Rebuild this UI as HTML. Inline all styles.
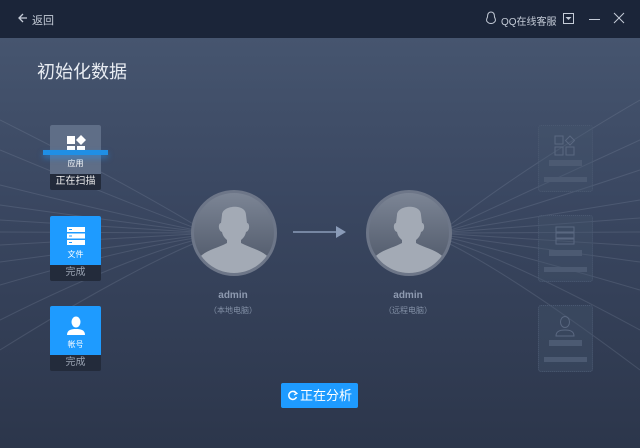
<!DOCTYPE html><html><head><meta charset="utf-8"><style>
body{margin:0;width:640px;height:448px;overflow:hidden;font-family:"Liberation Sans","Noto Sans CJK SC",sans-serif;position:relative;background:linear-gradient(#46556f 38px,#3a4761 200px,#2c364b 448px)}
.hd{position:absolute;left:0;top:0;width:640px;height:38px;background:#1b2539;color:#c5ccd8;font-size:11px}
.a{position:absolute}
.card{position:absolute;left:50px;width:51px;height:65px;border-radius:2px;overflow:hidden;background:#232b3b}
.card .t{height:49px;text-align:center;color:#fff;font-size:8px}
.card .b{height:16px;text-align:center;color:#9aa3b2;font-size:10px;line-height:16px}
.circ{position:absolute;width:80px;height:80px;border-radius:50%;border:3px solid #6d7688;background:linear-gradient(#7c8595,#4c5566);overflow:hidden}
.g{position:absolute;left:538px;width:53px;height:65px;border:1px dotted #4a5871;border-radius:3px;background:rgba(70,85,110,.35)}
.g .r1{position:absolute;left:10px;top:34px;width:33px;height:6px;background:#4c5a72}
.g .r2{position:absolute;left:5px;top:51px;width:43px;height:5px;background:#4c5a72}
.nm{position:absolute;width:100px;text-align:center;color:#8e9ab0;font-size:10px;font-weight:bold}
.sb{position:absolute;width:100px;text-align:center;color:#8390a6;font-size:8px}
</style></head><body>
<svg class="a" style="left:0;top:0" width="640" height="448">
<g stroke="#a0abbf" stroke-width="1" opacity="0.18" fill="none">
<path d="M0 120Q120 180 195 225"/><path d="M0 150Q120 200 195 228"/><path d="M0 185Q120 215 195 230"/><path d="M0 205Q120 222 195 231"/><path d="M0 220L195 232"/><path d="M0 232L195 233"/><path d="M0 245L195 234"/><path d="M0 262L195 236"/><path d="M0 285Q120 250 195 238"/><path d="M0 320Q120 260 195 240"/><path d="M0 350Q120 275 195 243"/>
<path d="M640 100Q520 170 450 225"/><path d="M640 140Q520 195 450 228"/><path d="M640 170Q520 210 450 230"/><path d="M640 200Q520 220 450 231"/><path d="M640 218L450 232"/><path d="M640 232L450 233"/><path d="M640 246L450 234"/><path d="M640 262L450 236"/><path d="M640 290Q520 255 450 238"/><path d="M640 330Q520 265 450 241"/><path d="M640 370Q520 280 450 244"/>
</g></svg>
<div class="hd">
<svg class="a" style="left:17px;top:12px" width="12" height="12"><path d="M10 6H2M6 2L2 6L6 10" stroke="#c5ccd8" stroke-width="1.3" fill="none"/></svg>
<span class="a" style="left:32px;top:12px">返回</span>
<svg class="a" style="left:485px;top:11px" width="12" height="14"><path d="M6 1C3 1 2.5 4 2.5 6C1.5 8 1 10 2.5 11C4 13 8 13 9.5 11C11 10 10.5 8 9.5 6C9.5 4 9 1 6 1Z" stroke="#c5ccd8" fill="none"/></svg>
<span class="a" style="left:501px;top:13px;font-size:10px">QQ在线客服</span>
<div class="a" style="left:563px;top:13px;width:9px;height:9px;border:1px solid #c5ccd8"></div>
<svg class="a" style="left:565px;top:16px" width="7" height="5"><path d="M0.5 1H6.5L3.5 4Z" fill="#c5ccd8"/></svg>
<div class="a" style="left:589px;top:19px;width:11px;height:1px;background:#c5ccd8"></div>
<svg class="a" style="left:613px;top:12px" width="12" height="12"><path d="M1 1L11 11M11 1L1 11" stroke="#c5ccd8" stroke-width="1"/></svg>
</div>
<div class="a" style="left:37px;top:58px;color:#e8ecf2;font-size:18px">初始化数据</div>

<div class="card" style="top:125px"><div class="t" style="background:#5f6e87">
<svg style="margin-top:10px" width="20" height="20"><rect x="1" y="1" width="8" height="8" fill="#fff"/><rect x="1" y="11" width="8" height="8" fill="#fff"/><rect x="11" y="11" width="8" height="8" fill="#fff"/><path d="M15 0L20 5L15 10L10 5Z" fill="#fff"/></svg><div style="margin-top:1px">应用</div></div><div class="b" style="color:#eee">正在扫描</div></div>
<div class="a" style="left:43px;top:150px;width:65px;height:5px;background:#1f8fe6;box-shadow:0 3px 6px rgba(30,150,255,.5)"></div>
<div class="card" style="top:216px"><div class="t" style="background:#1e9bff">
<svg style="margin-top:10px" width="20" height="20"><rect x="1" y="1" width="18" height="5" fill="#fff"/><rect x="1" y="7.5" width="18" height="5" fill="#fff"/><rect x="1" y="14" width="18" height="5" fill="#fff"/><g fill="#1e9bff"><rect x="3" y="3" width="3" height="1"/><rect x="3" y="9.5" width="3" height="1"/><rect x="3" y="16" width="3" height="1"/></g></svg><div style="margin-top:1px">文件</div></div><div class="b">完成</div></div>
<div class="card" style="top:306px"><div class="t" style="background:#1e9bff">
<svg style="margin-top:10px" width="20" height="20"><ellipse cx="10" cy="6" rx="4.5" ry="5.5" fill="#fff"/><path d="M1 19C1 14 5 13 10 13C15 13 19 14 19 19Z" fill="#fff"/></svg><div style="margin-top:1px">帐号</div></div><div class="b">完成</div></div>

<div class="circ" style="left:191px;top:190px"><svg width="80" height="80"><path d="M28 22C28 12 52 10 52 22L53 30C56 30 56 38 52 39C51 44 48 46 47 47L47 50C56 55 68 57 74 64L74 80L6 80L6 64C12 57 24 55 33 50L33 47C32 46 29 44 28 39C24 38 24 30 27 30Z" fill="#a3aab5"/></svg></div>
<div class="circ" style="left:366px;top:190px"><svg width="80" height="80"><path d="M28 22C28 12 52 10 52 22L53 30C56 30 56 38 52 39C51 44 48 46 47 47L47 50C56 55 68 57 74 64L74 80L6 80L6 64C12 57 24 55 33 50L33 47C32 46 29 44 28 39C24 38 24 30 27 30Z" fill="#a3aab5"/></svg></div>
<div class="nm" style="left:183px;top:290px">admin</div><div class="sb" style="left:183px;top:305px">（本地电脑）</div>
<div class="nm" style="left:358px;top:290px">admin</div><div class="sb" style="left:358px;top:305px">（远程电脑）</div>
<svg class="a" style="left:293px;top:225px" width="55" height="14"><path d="M0 7H45" stroke="#8a9bb8" stroke-width="1.5"/><path d="M43 1L53 7L43 13Z" fill="#8a9bb8"/></svg>

<div class="g" style="top:125px"><svg class="a" style="left:15px;top:9px" width="22" height="22" fill="none" stroke="#5a6881"><rect x="1" y="1" width="8" height="8"/><rect x="1" y="12" width="8" height="8"/><rect x="12" y="12" width="8" height="8"/><path d="M16 1L20.5 5.5L16 10L11.5 5.5Z"/></svg><div class="r1"></div><div class="r2"></div></div>
<div class="g" style="top:215px"><svg class="a" style="left:16px;top:10px" width="20" height="20" fill="none" stroke="#5a6881"><rect x="1" y="1" width="18" height="5"/><rect x="1" y="7" width="18" height="5"/><rect x="1" y="13" width="18" height="5"/></svg><div class="r1"></div><div class="r2"></div></div>
<div class="g" style="top:305px"><svg class="a" style="left:16px;top:9px" width="20" height="22" fill="none" stroke="#5a6881"><ellipse cx="10" cy="7" rx="4.5" ry="5.5"/><path d="M1 21C1 16 5 15 10 15C15 15 19 16 19 21Z"/></svg><div class="r1"></div><div class="r2"></div></div>

<div class="a" style="left:281px;top:383px;width:77px;height:25px;background:#1e9bff;border-radius:2px;color:#fff;font-size:13px;line-height:25px;text-align:center"><svg width="11" height="11" style="vertical-align:-1px;margin-right:2px"><path d="M9 3A4 4 0 1 0 9.5 7" stroke="#fff" stroke-width="1.5" fill="none"/><path d="M7 1L10 3.5L7 5" stroke="#fff" stroke-width="1.2" fill="none"/></svg>正在分析</div>
</body></html>
